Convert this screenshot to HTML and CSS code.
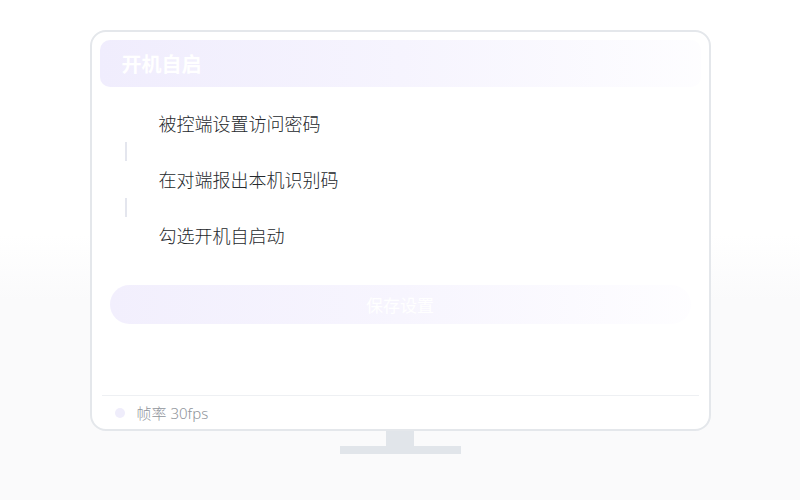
FILE: index.html
```html
<!DOCTYPE html>
<html lang="zh">
<head>
<meta charset="utf-8">
<link rel="stylesheet" href="styles.css">
</head>
<body>
<div class="stage">
  <div class="monitor">
    <div class="header">开机自启</div>
    <div class="steps">
      <div class="step">被控端设置访问密码</div>
      <div class="connector"></div>
      <div class="step">在对端报出本机识别码</div>
      <div class="connector"></div>
      <div class="step">勾选开机自启动</div>
    </div>
    <div class="save">保存设置</div>
    <div class="footer">
      <span class="dot"></span>
      <span class="fps">帧率 30fps</span>
    </div>
  </div>
  <div class="neck"></div>
  <div class="base"></div>
</div>
</body>
</html>
```
FILE: styles.css
```css
html, body {
  margin: 0;
  padding: 0;
}
body {
  width: 800px;
  height: 500px;
  overflow: hidden;
  font-family: "Noto Sans", "Noto Sans CJK SC", sans-serif;
  background: linear-gradient(to bottom, #ffffff 0%, #ffffff 47%, #fafafb 60%, #fafafb 100%);
}
.stage {
  padding-top: 30px;
  display: flex;
  flex-direction: column;
  align-items: center;
}
.monitor {
  width: 621px;
  height: 401px;
  box-sizing: border-box;
  border: 2px solid #e4e7eb;
  border-radius: 16px;
  background: #ffffff;
  padding: 8px 8px 0;
  display: flex;
  flex-direction: column;
}
.header {
  height: 47px;
  border-radius: 10px;
  background: linear-gradient(to right, #f0edfd 0%, #f6f4fe 50%, rgba(250, 249, 255, 0.3) 100%);
  color: #ffffff;
  font-size: 20px;
  font-weight: 700;
  display: flex;
  align-items: center;
  padding-left: 22px;
  font-family: "Noto Sans CJK SC", sans-serif;
}
.steps {
  margin-top: 18px;
  display: flex;
  flex-direction: column;
}
.step {
  height: 36px;
  line-height: 36px;
  padding-left: 59px;
  font-size: 18px;
  color: #25282c;
  font-weight: 300;
  font-family: "Noto Sans CJK SC", sans-serif;
}
.connector {
  width: 2px;
  height: 19px;
  margin: 1px 0 0 25px;
  background: #e4e6ee;
}
.save {
  margin: 32px 10px 0;
  height: 39px;
  border-radius: 20px;
  background: linear-gradient(to right, #f2effd 0%, #f7f5fe 50%, rgba(252, 251, 255, 0.4) 100%);
  color: #ffffff;
  font-size: 17px;
  display: flex;
  align-items: center;
  justify-content: center;
  font-family: "Noto Sans CJK SC", sans-serif;
}
.footer {
  margin: auto 2px 0;
  height: 33px;
  border-top: 1px solid #eef0f3;
  display: flex;
  align-items: center;
  padding-left: 13px;
  gap: 12px;
}
.dot {
  width: 10px;
  height: 10px;
  border-radius: 50%;
  background: #efedfb;
}
.fps {
  font-size: 15px;
  color: #8f949b;
  font-weight: 300;
}
.neck {
  width: 28px;
  height: 15px;
  background: #e1e5ea;
}
.base {
  width: 121px;
  height: 8px;
  background: #e1e5ea;
}
```
